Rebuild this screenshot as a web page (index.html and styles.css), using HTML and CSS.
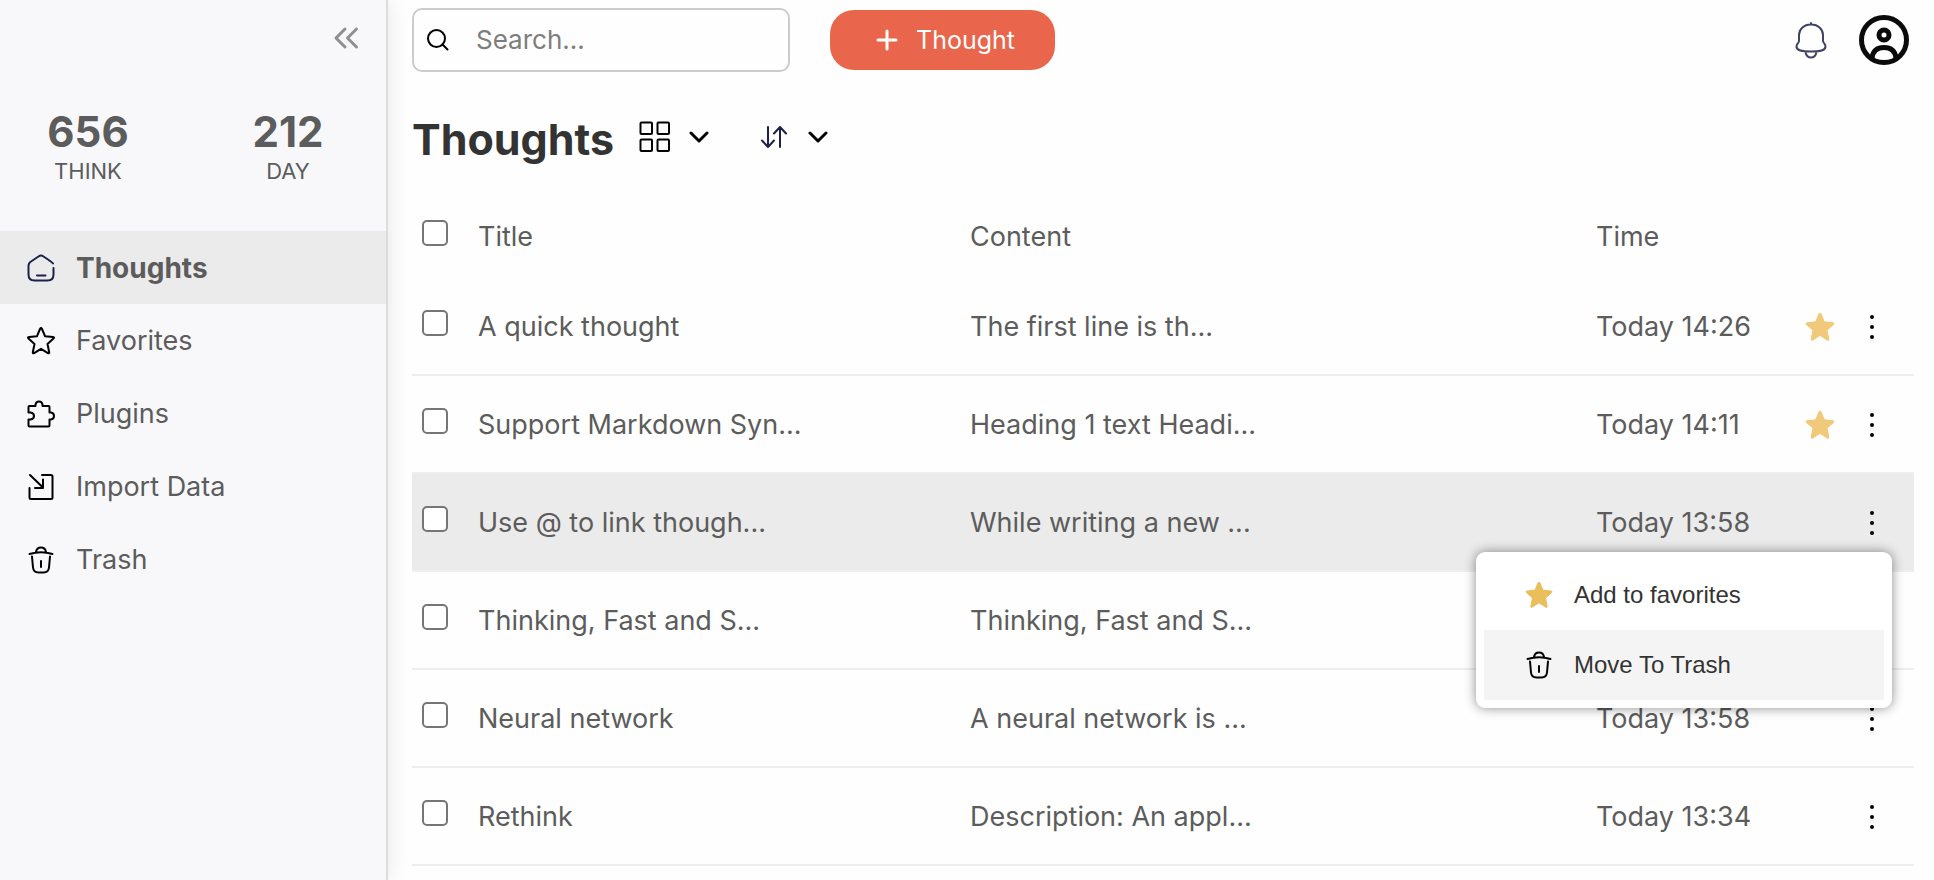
FILE: index.html
```html
<!DOCTYPE html>
<html lang="en">
<head>
  <meta charset="UTF-8">
  <title>Thoughts</title>
  <link rel="stylesheet" href="styles.css">
</head>
<body>

<!-- Shared icons -->
<svg class="sprite" aria-hidden="true">
  <symbol id="icon-star" viewBox="0 0 28 28">
    <path d="M13 2q1-1.800 2 0l3 7.200 8 .8q1.800.4.5 1.600l-6 5.400 1.700 8.200q.1 1.600-1.300 1L14 21.800l-6.900 4.400q-1.400.600-1.300-1l1.700-8.200-6-5.400Q.200 10.400 2 10l8-.8z"/>
  </symbol>
  <symbol id="icon-trash" viewBox="0 0 28 28">
    <path d="M2.500 8Q14 4.500 25.500 8M9 6C9.500 3 11.500 1.500 14 1.500S18.500 3 19 6M5 10.500l1 11q.5 5 5.500 5h5q5 0 5.500-5l1-11M14 15v6"/>
  </symbol>
  <symbol id="icon-dots" viewBox="0 0 6 26">
    <circle cx="3" cy="3" r="2"/>
    <circle cx="3" cy="13" r="2"/>
    <circle cx="3" cy="23" r="2"/>
  </symbol>
  <symbol id="icon-chevron" viewBox="0 0 20 12">
    <path d="M2 2l8 8 8-8"/>
  </symbol>
</svg>

<div class="layout">
  <!-- Left Sidebar -->
  <aside class="sidebar">
    <div class="sidebar-top">
      <button class="collapse" aria-label="Collapse sidebar">
        <svg class="line" width="26" height="24" viewBox="0 0 26 24"><path d="M12 3l-9 9 9 9M23.500 3l-9 9 9 9"/></svg>
      </button>
    </div>

    <div class="stats">
      <div class="stat"><strong>656</strong><span>THINK</span></div>
      <div class="stat"><strong>212</strong><span>DAY</span></div>
    </div>

    <nav class="menu">
      <a href="#thoughts" class="active">
        <svg class="line navy" width="28" height="28" viewBox="0 0 28 28"><path d="M26 9.500Q25 8 16.500 2.500 14 .500 11.500 2.500L4 7.500Q1.500 9 1.500 12v8.500q0 6 6 6h13q6 0 6-6V14M10 21.500h8.500"/></svg>
        Thoughts
      </a>
      <a href="#favorites">
        <svg class="line" width="28" height="28"><use href="#icon-star"/></svg>
        Favorites
      </a>
      <a href="#plugins">
        <svg class="line" width="28" height="28" viewBox="0 0 28 28"><path d="M2.500 6H8.500V4.500q.5-3 3.500-3t3.500 3V6h6q1 0 1 1v5.500h1.500q3 .5 3 3.500t-3 3.500h-1.500v6q0 1-1 1h-19q-1 0-1-1v-6h2q3.500-.5 3.500-3.500t-3.500-3.500h-2V7q0-1 1-1z"/></svg>
        Plugins
      </a>
      <a href="#import">
        <svg class="line" width="28" height="28" viewBox="0 0 28 28"><path d="M3 2l13 12.500M16 6.500v8.500H8M15 2h9q1.500 0 1.500 1.500v21q0 1.500-1.500 1.500H4q-1.500 0-1.500-1.500V15"/></svg>
        Import Data
      </a>
      <a href="#trash">
        <svg class="line" width="28" height="28"><use href="#icon-trash"/></svg>
        Trash
      </a>
    </nav>
  </aside>

  <!-- Right Content -->
  <main class="main">
    <header class="topbar">
      <label class="search">
        <svg class="line" width="24" height="24" viewBox="0 0 24 24"><circle cx="10.500" cy="10.500" r="8.500"/><path d="M16.500 16.500l5 5"/></svg>
        <input type="text" placeholder="Search..." aria-label="Search">
      </label>
      <button class="new-thought">
        <svg class="line" width="22" height="22" viewBox="0 0 22 22"><path d="M11 2v18M2 11h18"/></svg>
        Thought
      </button>
      <div class="account">
        <button aria-label="Notifications">
          <svg class="line bell" width="34" height="40" viewBox="0 0 34 40"><path d="M17 3v1M17 4.500C9.500 4.500 5 9.500 5 15v6c0 2-2.500 2.500-2.500 5.500 0 4 5 5 14.500 5S31.500 30.500 31.500 26.500c0-3-2.500-3.500-2.500-5.500v-6C29 9.500 24.500 4.500 17 4.500zM11.500 32q1 5.500 5.500 5.500t5.500-5.500"/></svg>
        </button>
        <button aria-label="Profile">
          <svg class="line avatar" width="50" height="50" viewBox="0 0 50 50"><circle cx="25" cy="25" r="22.500"/><circle cx="25" cy="20" r="5"/><path d="M13 43C14 35 19 32.500 25 32.500S36 35 37 43"/></svg>
        </button>
      </div>
    </header>

    <div class="heading">
      <h1>Thoughts</h1>
      <button class="view" aria-label="Change view">
        <svg class="line" width="32" height="32" viewBox="0 0 32 32"><rect x="1.500" y="1.500" width="11.500" height="11.500" rx="1"/><rect x="18.500" y="1.500" width="11.500" height="11.500" rx="1"/><rect x="1.500" y="18.500" width="11.500" height="11.500" rx="1"/><rect x="18.500" y="18.500" width="11.500" height="11.500" rx="1"/></svg>
        <svg class="line chevron" width="20" height="12"><use href="#icon-chevron"/></svg>
      </button>
      <button class="sort" aria-label="Sort">
        <svg class="line navy" width="28" height="22" viewBox="0 0 28 22"><path d="M8 1v20M2 14.500l6 6.500 6-6.500M20 21V1M14 7.500L20 1l6 6.500"/></svg>
        <svg class="line chevron" width="20" height="12"><use href="#icon-chevron"/></svg>
      </button>
    </div>

    <table class="thoughts">
      <thead>
        <tr>
          <th class="check"><input type="checkbox" aria-label="Select all"></th>
          <th class="title">Title</th>
          <th class="content">Content</th>
          <th class="time">Time</th>
          <th class="fav"></th>
          <th class="more"></th>
        </tr>
      </thead>
      <tbody>
        <tr>
          <td><input type="checkbox" aria-label="Select A quick thought"></td>
          <td>A quick thought</td>
          <td>The first line is th...</td>
          <td>Today 14:26</td>
          <td><svg class="star" width="30" height="30"><use href="#icon-star"/></svg></td>
          <td><button aria-label="More"><svg width="6" height="26"><use href="#icon-dots"/></svg></button></td>
        </tr>
        <tr>
          <td><input type="checkbox" aria-label="Select Support Markdown Syntax"></td>
          <td>Support Markdown Syn...</td>
          <td>Heading 1 text Headi...</td>
          <td>Today 14:11</td>
          <td><svg class="star" width="30" height="30"><use href="#icon-star"/></svg></td>
          <td><button aria-label="More"><svg width="6" height="26"><use href="#icon-dots"/></svg></button></td>
        </tr>
        <tr class="selected">
          <td><input type="checkbox" aria-label="Select Use @ to link thoughts"></td>
          <td>Use @ to link though...</td>
          <td>While writing a new ...</td>
          <td>Today 13:58</td>
          <td></td>
          <td class="has-menu">
            <button aria-label="More"><svg width="6" height="26"><use href="#icon-dots"/></svg></button>
            <div class="popup">
              <button><svg class="star" width="28" height="28"><use href="#icon-star"/></svg>Add to favorites</button>
              <button class="hover"><svg class="line" width="28" height="28"><use href="#icon-trash"/></svg>Move To Trash</button>
            </div>
          </td>
        </tr>
        <tr>
          <td><input type="checkbox" aria-label="Select Thinking, Fast and Slow"></td>
          <td>Thinking, Fast and S...</td>
          <td>Thinking, Fast and S...</td>
          <td></td>
          <td></td>
          <td></td>
        </tr>
        <tr>
          <td><input type="checkbox" aria-label="Select Neural network"></td>
          <td>Neural network</td>
          <td>A neural network is ...</td>
          <td>Today 13:58</td>
          <td></td>
          <td><button aria-label="More"><svg width="6" height="26"><use href="#icon-dots"/></svg></button></td>
        </tr>
        <tr>
          <td><input type="checkbox" aria-label="Select Rethink"></td>
          <td>Rethink</td>
          <td>Description: An appl...</td>
          <td>Today 13:34</td>
          <td></td>
          <td><button aria-label="More"><svg width="6" height="26"><use href="#icon-dots"/></svg></button></td>
        </tr>
      </tbody>
    </table>
  </main>
</div>

</body>
</html>
```

FILE: styles.css
```css
* {
  box-sizing: border-box;
}

body {
  margin: 0;
  font-family: Inter, "Liberation Sans", sans-serif;
  font-size: 27px;
  line-height: 32px;
  color: #5c5c5c;
  background: #fefefe;
}

button {
  display: flex;
  align-items: center;
  padding: 0;
  border: none;
  background: none;
  font: inherit;
  color: #000;
  cursor: pointer;
}

svg {
  display: block;
  flex: none;
}

.sprite {
  position: absolute;
  width: 0;
  height: 0;
}

.line {
  fill: none;
  stroke: #000;
  stroke-width: 2;
  stroke-linecap: round;
  stroke-linejoin: round;
}

.navy {
  stroke: #1c2149;
}

.star {
  fill: #f0ca7a;
  stroke: #f0ca7a;
  stroke-linejoin: round;
}

.layout {
  display: flex;
  min-height: 100vh;
}

/* Left Sidebar */
.sidebar {
  flex: none;
  width: 388px;
  background: #f8f8fb;
  border-right: 2px solid #dddddd;
  box-shadow: 0 0 20px rgba(0, 0, 0, 0.1);
}

.sidebar-top {
  display: flex;
  justify-content: flex-end;
  padding: 26px 27px 0 0;
}

.collapse .line {
  stroke: #8f8f8f;
  stroke-width: 3;
}

.stats {
  display: flex;
  justify-content: space-between;
  padding: 59px 58px 44px 48px;
}

.stat {
  display: flex;
  flex-direction: column;
  align-items: center;
  width: 80px;
  font-size: 22px;
}

.stat strong {
  font-size: 42px;
  line-height: 46px;
}

.menu a {
  display: flex;
  align-items: center;
  gap: 21px;
  height: 73px;
  padding-left: 27px;
  color: inherit;
  text-decoration: none;
}

.menu a.active {
  background: #ebebeb;
  font-size: 28px;
  font-weight: 700;
}

/* Right Main Section */
.main {
  flex: 1;
  min-width: 0;
  padding: 8px 20px 0 24px;
}

.topbar {
  display: flex;
  align-items: center;
}

.search {
  display: flex;
  align-items: center;
  gap: 26px;
  width: 378px;
  height: 64px;
  padding: 0 12px;
  border: 2px solid #cccccc;
  border-radius: 10px;
}

.search input {
  flex: 1;
  min-width: 0;
  padding: 0;
  border: none;
  outline: none;
  background: none;
  font: inherit;
  font-size: 26px;
}

.search input::placeholder {
  color: #7d7d7d;
}

.new-thought {
  justify-content: center;
  gap: 18px;
  width: 225px;
  height: 60px;
  margin-left: 40px;
  padding-left: 6px;
  border-radius: 24px;
  background: #e9664c;
  color: #fff;
  font-size: 25px;
}

.new-thought .line {
  stroke: #fff;
  stroke-width: 3;
}

.account {
  display: flex;
  align-items: center;
  gap: 31px;
  margin-left: auto;
  padding-right: 5px;
}

.bell {
  stroke: #414466;
}

.avatar {
  stroke: #0b0b0b;
  stroke-width: 5;
}

.heading {
  display: flex;
  align-items: center;
  padding-top: 39px;
}

.heading h1 {
  margin: 0;
  padding-top: 4px;
  font-size: 43px;
  line-height: 48px;
  color: #333333;
}

.heading .chevron {
  stroke-width: 3;
}

.view {
  gap: 18px;
  margin-left: 25px;
}

.sort {
  gap: 20px;
  margin-left: 51px;
}

/* Thoughts table */
.thoughts {
  width: 100%;
  margin-top: 31px;
  border-collapse: collapse;
  table-layout: fixed;
}

.thoughts th,
.thoughts td {
  height: 98px;
  padding: 2px 0 0;
  font-weight: 400;
  text-align: left;
  white-space: nowrap;
}

.thoughts th {
  height: 83px;
}

.thoughts tbody tr {
  border-bottom: 2px solid #eeeeee;
}

.thoughts tbody tr.selected {
  background: #ebebeb;
}

.thoughts .check {
  width: 66px;
}

.thoughts .content {
  width: 626px;
}

.thoughts .time {
  width: 209px;
}

.thoughts .fav {
  width: 64px;
}

.thoughts .more {
  width: 45px;
}

.thoughts input {
  appearance: none;
  display: block;
  width: 26px;
  height: 26px;
  margin: 0 0 8px 10px;
  border: 2px solid #767676;
  border-radius: 5px;
  background: #fff;
}

/* Row menu */
.has-menu {
  position: relative;
}

.popup {
  position: absolute;
  top: 78px;
  right: 22px;
  width: 416px;
  padding: 8px;
  border-radius: 9px;
  background: #fff;
  box-shadow: 0 0 12px rgba(0, 0, 0, 0.45);
}

.popup button {
  gap: 21px;
  width: 100%;
  height: 70px;
  padding-left: 41px;
  font-family: "Liberation Sans", sans-serif;
  font-size: 24px;
  color: #333333;
}

.popup button.hover {
  background: #f4f4f4;
}

.popup .star {
  fill: #eabe5a;
  stroke: #eabe5a;
}
```
